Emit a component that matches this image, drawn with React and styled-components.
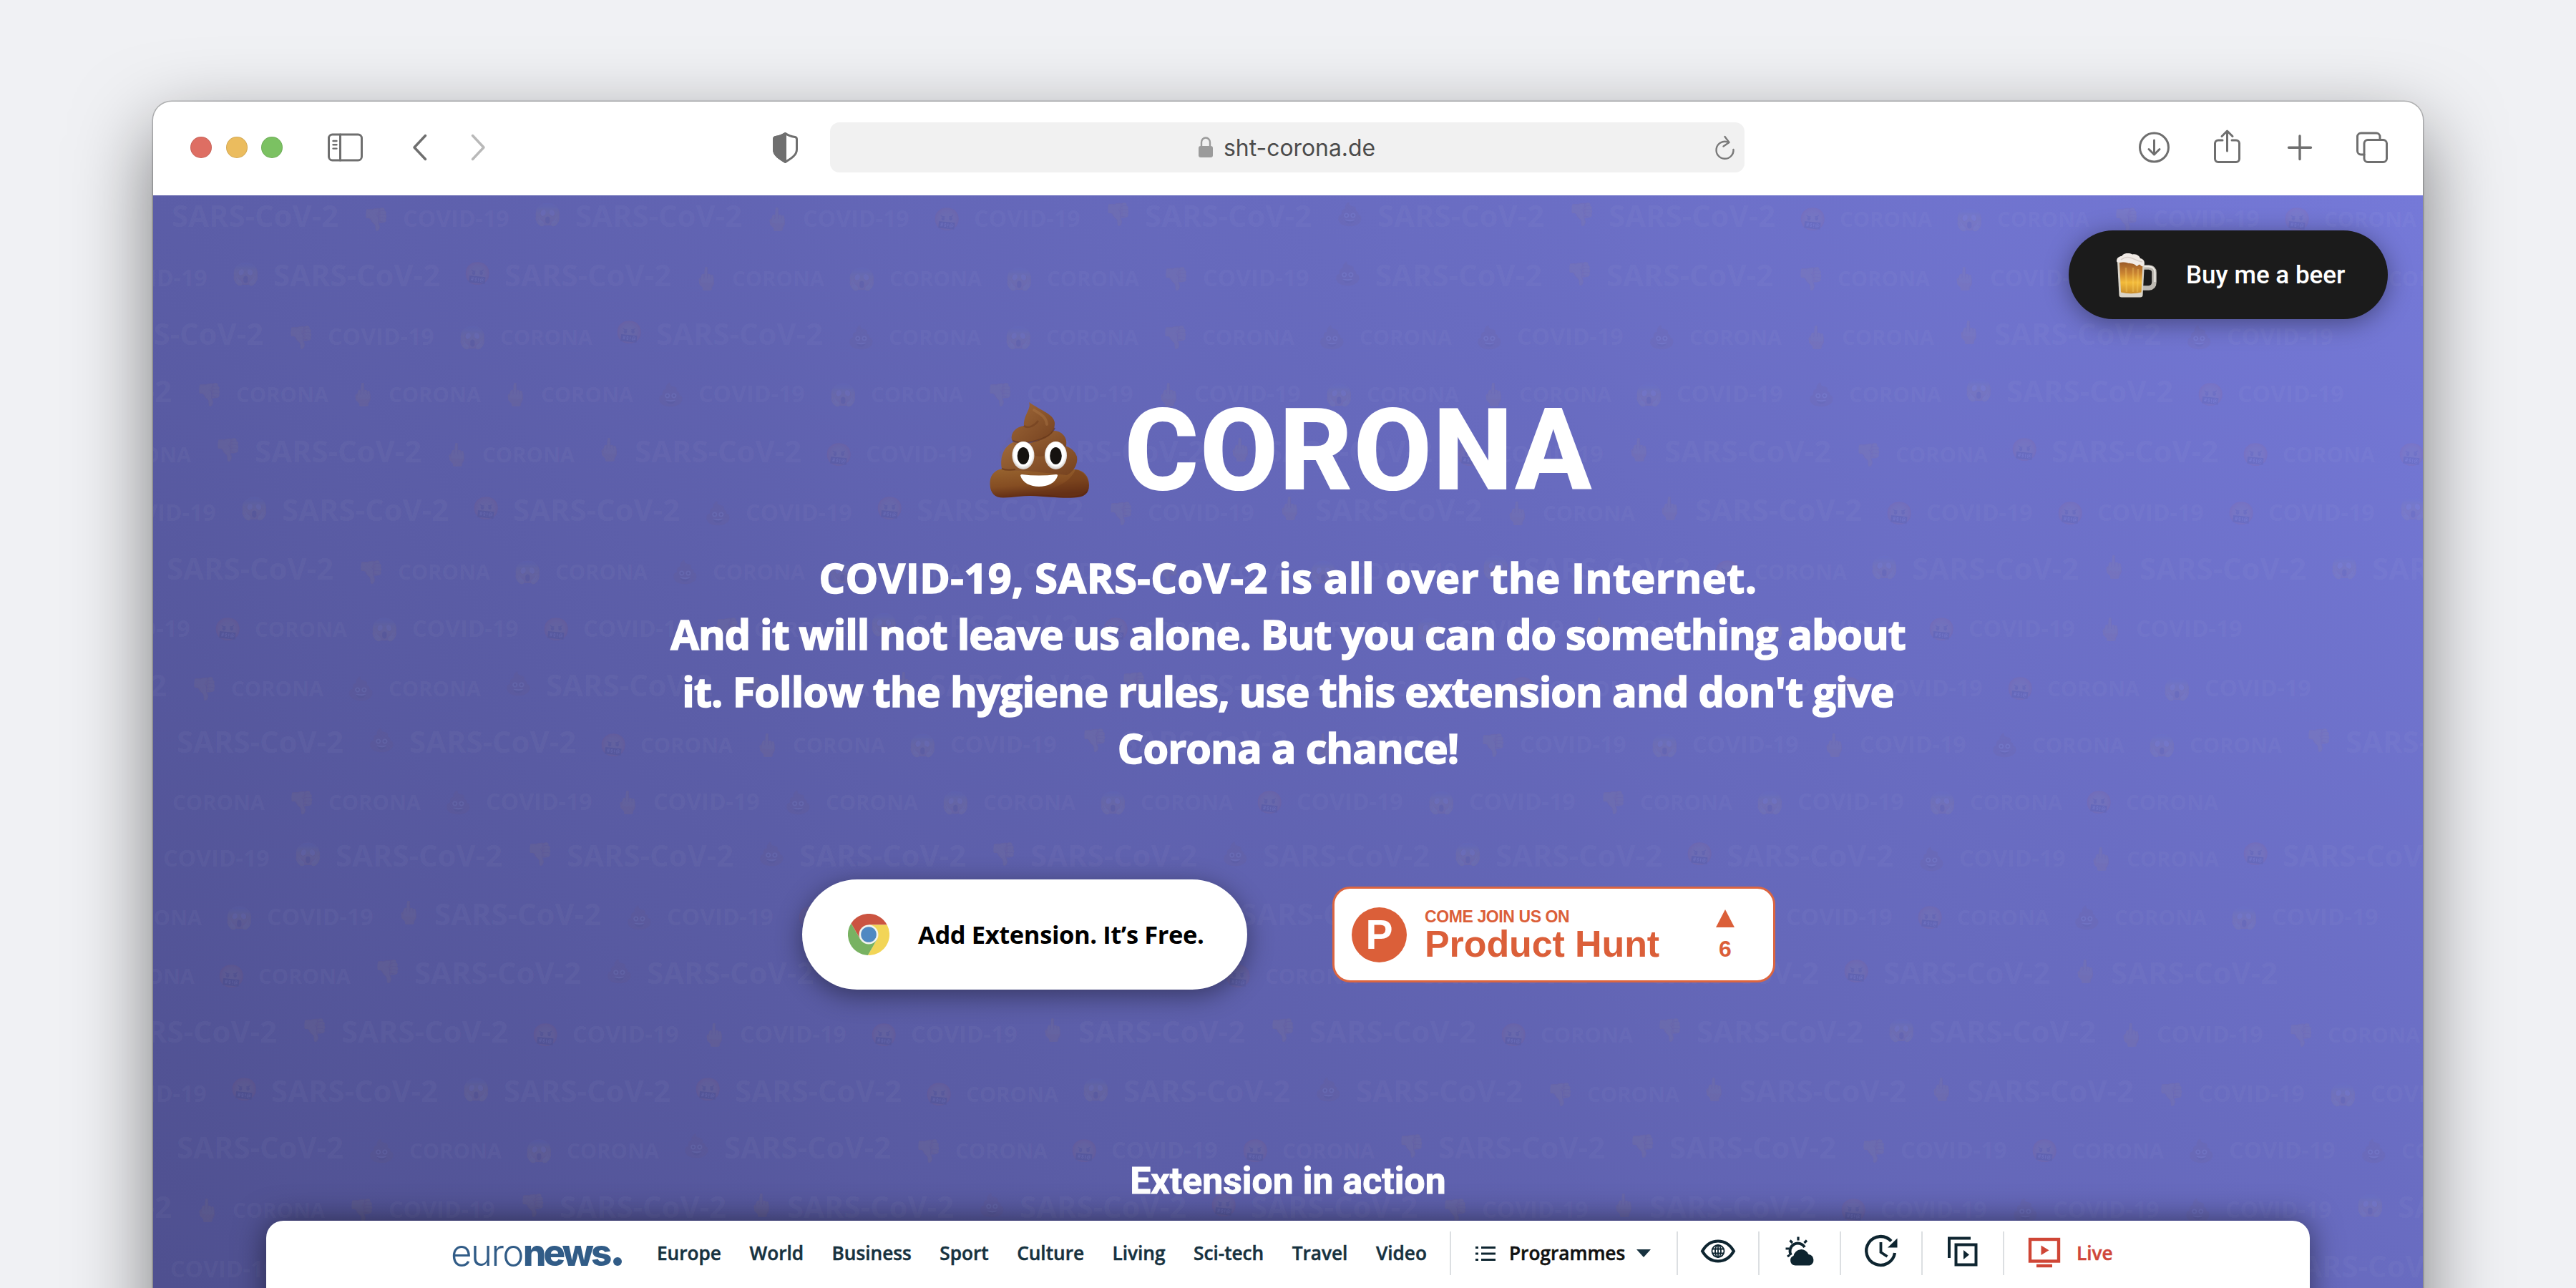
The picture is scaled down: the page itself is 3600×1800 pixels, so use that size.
import styled, { createGlobalStyle } from 'styled-components'

const GlobalStyle = createGlobalStyle`
  * {
    box-sizing: border-box;
  }

  body {
    margin: 0;
  }
`

const Desktop = styled.div`
  height: 1800px;
  padding: 142px 214px 0;
  overflow: hidden;
  background: #f0f1f4;
`

const Browser = styled.div`
  display: flex;
  flex-direction: column;
  height: 1760px;
  border-radius: 26px;
  overflow: hidden;
  background: #fff;
  box-shadow: 0 0 0 1.5px rgba(0, 0, 0, 0.22), 0 40px 110px rgba(0, 0, 0, 0.5);
`

/* browser toolbar */

const Toolbar = styled.div`
  display: flex;
  align-items: center;
  flex: none;
  height: 131px;
  padding: 0 47px 3px 52px;
  color: #6f6f6f;
`

const Lights = styled.div`
  display: flex;
  gap: 19.5px;
`

const Light = styled.span`
  width: 30px;
  height: 30px;
  border-radius: 50%;
  background: ${({ $color }) => $color};
  box-shadow: inset 0 0 0 1px rgba(0, 0, 0, 0.1);
`

const ToolIcon = styled.svg`
  flex: none;
  width: ${({ $width }) => $width}px;
  height: 48px;
  margin-left: ${({ $gap }) => $gap}px;
  overflow: visible;
  fill: none;
  stroke: ${({ $muted }) => ($muted ? '#b9b9b9' : 'currentColor')};
  stroke-width: 3;
  stroke-linecap: round;
  stroke-linejoin: round;
`

const AddressBar = styled.div`
  display: flex;
  align-items: center;
  flex: none;
  width: 1278px;
  height: 70px;
  margin-left: 45px;
  padding: 0 14px 0 515px;
  border-radius: 13px;
  background: #f1f1f1;
`

const Address = styled.span`
  flex: 1;
  margin-left: 15px;
  font: 400 31.9px/70px Inter, sans-serif;
  color: #4c4c4c;
  padding-top: 2px;
`

const AddressIcon = styled.svg`
  flex: none;
  width: ${({ $width }) => $width}px;
  height: 34px;
  overflow: visible;
  fill: none;
  stroke: #7a7a7a;
  stroke-width: 2.4;
  stroke-linecap: round;
  stroke-linejoin: round;
`

/* page */

const Page = styled.div`
  position: relative;
  flex: 1;
  overflow: hidden;
  background: linear-gradient(45deg, #4e4f8e, #7579d8);
`

const Wallpaper = styled.div`
  position: absolute;
  inset: -12px 0 0;
  overflow: hidden;
`

const WallRow = styled.div`
  display: flex;
  align-items: baseline;
  height: ${({ $height }) => $height}px;
  margin-left: ${({ $start }) => $start - 216}px;
`

const Word = styled.span`
  flex: none;
  width: ${({ $width }) => $width}px;
  font: 700 ${({ $size }) => $size}px/80px 'Open Sans', sans-serif;
  white-space: nowrap;
  color: rgba(255, 255, 255, 0.046);
`

const Emoji = styled.span`
  flex: none;
  width: ${({ $width }) => $width}px;
  padding-left: 15px;
  font: 31px/60px 'Noto Color Emoji', sans-serif;
  text-align: center;
  opacity: 0.048;
  transform: translateY(${({ $raised }) => ($raised ? -7 : 0)}px);
`

const Blank = styled.span`
  flex: none;
  width: ${({ $width }) => $width}px;
`

const Content = styled.main`
  position: relative;
  display: flex;
  flex-direction: column;
  align-items: center;
  color: #fff;
`

const BeerButton = styled.button`
  display: flex;
  align-items: center;
  align-self: flex-end;
  width: 446px;
  height: 124px;
  margin: 49px 49px 0 0;
  padding: 2px 0 0 67px;
  border: 0;
  border-radius: 62px;
  background: #1b1b1b;
  box-shadow: 0 6px 34px rgba(0, 0, 0, 0.38);
  font: 500 35px/60px Roboto, sans-serif;
  color: #fff;
`

const BeerIcon = styled.svg`
  flex: none;
  width: 57px;
  height: 62px;
  margin-right: 40px;
`

const Heading = styled.h1`
  display: flex;
  align-items: center;
  gap: 49px;
  margin: 104px 0 0 9px;
  font: 800 159px/160px Roboto, sans-serif;
  letter-spacing: 1.2px;
`

const Poop = styled.svg`
  width: 139px;
  height: 134px;
  margin-top: -3px;
  overflow: visible;
`

const Lead = styled.p`
  display: flex;
  flex-direction: column;
  align-items: center;
  margin: 58px 0 0;
  font: 700 57.5px/79.3px 'Open Sans', sans-serif;
  white-space: nowrap;
  -webkit-text-stroke: 1.6px #fff;
`

const Line = styled.span`
  letter-spacing: ${({ $tracking }) => $tracking}px;
`

const Actions = styled.div`
  display: flex;
  align-items: center;
  gap: 119px;
  margin: 144px 0 0 2px;
`

const AddButton = styled.button`
  display: flex;
  align-items: center;
  width: 622px;
  height: 154px;
  padding: 0 0 0 64px;
  border: 0;
  border-radius: 77px;
  background: #fff;
  box-shadow: 0 8px 36px rgba(0, 0, 0, 0.42);
  font: 700 34.5px/60px 'Open Sans', sans-serif;
  letter-spacing: -0.4px;
  white-space: nowrap;
  color: #000;
`

const ChromeIcon = styled.svg`
  flex: none;
  width: 58px;
  height: 58px;
  margin-right: 40px;
`

const HuntBadge = styled.a`
  display: flex;
  align-items: center;
  width: 619px;
  height: 134px;
  padding: 0 54px 0 24px;
  border: 3px solid #dc6540;
  border-radius: 25px;
  background: #fff;
  font-family: 'Liberation Sans', Arial, sans-serif;
  font-weight: 700;
  color: #db5f39;
`

const HuntLogo = styled.span`
  width: 77px;
  height: 77px;
  border-radius: 50%;
  background: #db5f39;
  font-size: 57px;
  line-height: 77px;
  text-align: center;
  color: #fff;
`

const HuntText = styled.span`
  display: flex;
  flex-direction: column;
  flex: 1;
  margin-left: 25px;
  padding-top: 2px;
  white-space: nowrap;
`

const HuntSmall = styled.small`
  font-size: 23px;
  line-height: 24px;
  letter-spacing: -0.4px;
`

const HuntName = styled.strong`
  font-size: 52px;
  line-height: 53px;
  letter-spacing: -0.1px;
`

const Votes = styled.span`
  display: flex;
  flex-direction: column;
  align-items: center;
  gap: 12px;
  font-size: 32px;
  line-height: 36px;
  margin-top: 3px;
`

const UpArrow = styled.span`
  border: 13.5px solid transparent;
  border-top: 0;
  border-bottom: 25px solid #db5f39;
`

const SectionTitle = styled.h2`
  margin: 238px 0 0;
  font: 700 51.6px/60px Roboto, sans-serif;
  letter-spacing: 0.1px;
  -webkit-text-stroke: 0.9px #fff;
`

/* news site shown in the demo */

const Demo = styled.section`
  display: flex;
  align-items: flex-start;
  width: 2856px;
  height: 300px;
  margin: 25px 0 0;
  padding: 15px 0 0 258px;
  border-radius: 24px;
  background: #fff;
  box-shadow: 0 0 44px rgba(0, 0, 0, 0.5);
  font: 600 26.2px/61px 'Open Sans', sans-serif;
  color: #17323f;
`

const NewsLogo = styled.div`
  display: flex;
  align-items: baseline;
  flex: none;
  width: 288px;
  font: 300 51px/60px Inter, sans-serif;
  letter-spacing: -1.6px;
  color: #315c87;

  b {
    font-weight: 800;
    letter-spacing: -3.8px;
  }

  i {
    width: 12px;
    height: 12px;
    margin-left: 6px;
    border-radius: 50%;
    background: currentColor;
  }
`

const Nav = styled.nav`
  display: flex;
  justify-content: space-between;
  flex: none;
  width: 1076px;
  margin-right: 32px;
  -webkit-text-stroke: 0.5px currentColor;
`

const Tool = styled.div`
  display: flex;
  align-items: center;
  flex: none;
  justify-content: ${({ $wide }) => ($wide ? 'flex-start' : 'center')};
  width: ${({ $wide }) => $wide || 114}px;
  height: 61px;
  padding-left: ${({ $wide }) => ($wide ? 34 : 0)}px;
  border-left: 2px solid #dcdfe2;
  color: ${({ $color }) => $color || '#0e2530'};
`

const SiteIcon = styled.svg`
  flex: none;
  width: ${({ $width }) => $width}px;
  height: 48px;
  margin-top: -7px;
  overflow: visible;
  fill: none;
  stroke: currentColor;
  stroke-width: 4;
`

const ToolLabel = styled.span`
  margin-left: ${({ $gap }) => $gap}px;
  color: ${({ $color }) => $color};
  -webkit-text-stroke: 0.5px currentColor;
`

const Caret = styled.span`
  margin-left: 16px;
  border: 10px solid transparent;
  border-bottom: 0;
  border-top: 11px solid #17323f;
`

const WORDS = {
  S: { text: 'SARS-CoV-2', size: 41.8, width: 233 },
  C: { text: 'COVID-19', size: 32.2, width: 149 },
  K: { text: 'CORONA', size: 29.4, width: 128 }
}

const EMOJI = {
  t: { text: '👎', width: 90 },
  s: { text: '😱', width: 92 },
  m: { text: '🤬', width: 90 },
  f: { text: '🖕', width: 85 },
  p: { text: '💩', width: 92 }
}

// height of the row, x where it starts, then words and emojis; other numbers are blanks
const ROWS = [
  '83 242 S t C s S f C m C t S p S t S m K s K t C m K',
  '82 143 C s S m S f K s K s K t C p S t S t K f C m S f K',
  '80 137 S t C s K m S p K s K t K p K p C p K f K f S p C',
  '83.5 9 S t K f K f K p C s K t C f C s K f K s C p K s S m C',
  '82.5 140 K t S f K f S m C p S f S m C f S t K m S m K m C',
  '82 155 C s S m S p C m S t C f S f K f S m C m C m C s S',
  '80 235 S t K s K p K s K f C t K s C s S m K s S f S s S',
  '83 119 C m K s C m C t K s S m K p K s C f C s C m C f C',
  '79 2 S t K p K p S t K f S t S p K m K m C m C m K s C',
  '84 249 S p S m K f K s C t S f C t C s C f C p K s K t S',
  '75 243 K t K p C f C p K s K s K m C s C t K s C s K m K',
  '82 230 C s S t S p S t S p S s S m S p C f K m S',
  '82 155 K s C f S p C m C m S m S s K p K m C m K p K s C',
  '82 145 K m K t S p S m S t K m K m S t S m S f S',
  '83 156 S t S m C f C m C f S t S m K t S s S f C t K',
  '79 142 C m S s S m S m K s S p S t K f S f S t C s C',
  '83 249 S p K s K p S t K m C m K t S t S t C m K p C p K',
  '83 9 S f K t C t S f S p S m S t C f S m C p C p C s S',
  '83 240 C 2806 S'
]

const Wall = () => (
  <Wallpaper aria-hidden>
    {ROWS.map((row, i) => {
      const [height, start, ...tokens] = row.split(' ')
      return (
        <WallRow key={i} $height={Number(height)} $start={Number(start)}>
          {tokens.map((token, j) => {
            if (WORDS[token]) {
              const { text, size, width } = WORDS[token]
              return (
                <Word key={j} $size={size} $width={width}>
                  {text}
                </Word>
              )
            }
            if (EMOJI[token]) {
              const { text, width } = EMOJI[token]
              return (
                <Emoji key={j} $width={width} $raised={tokens[j + 1] === 'S'}>
                  {text}
                </Emoji>
              )
            }
            return <Blank key={j} $width={Number(token)} />
          })}
        </WallRow>
      )
    })}
  </Wallpaper>
)

const BrowserToolbar = () => (
  <Toolbar>
    <Lights>
      <Light $color="#de6e63" />
      <Light $color="#ebbc5e" />
      <Light $color="#7bc162" />
    </Lights>
    <ToolIcon $width={49} $gap={63} viewBox="0 0 49 48">
      <rect x="1.5" y="6" width="46" height="36" rx="5" />
      <path d="M17.5 6v36" />
      <path d="M7.5 15h5M7.5 20.3h5M7.5 25.6h5" strokeWidth="2.4" />
    </ToolIcon>
    <ToolIcon $width={19} $gap={70} viewBox="0 0 19 48">
      <path d="M17.5 7.5L2 24l15.5 16.5" strokeWidth="3.5" />
    </ToolIcon>
    <ToolIcon $width={19} $gap={63} $muted viewBox="0 0 19 48">
      <path d="M1.5 7.5L17 24L1.5 40.5" strokeWidth="3.5" />
    </ToolIcon>
    <ToolIcon $width={35} $gap={402} viewBox="0 0 35 48">
      <path d="M17.5 4.5C12.5 8 7.5 9 4 9.6Q1.5 10 1.5 12.5V27C1.5 35 10 40 17.5 44.5C25 40 33.5 35 33.5 27V12.5Q33.5 10 31 9.6C27.5 9 22.5 8 17.5 4.5Z" />
      <path
        d="M17.5 4.5C12.5 8 7.5 9 4 9.6Q1.5 10 1.5 12.5V27C1.5 35 10 40 17.5 44.5Z"
        fill="currentColor"
      />
    </ToolIcon>
    <AddressBar>
      <AddressIcon $width={20} viewBox="0 0 20 34">
        <rect x="0" y="15" width="20" height="16" rx="3" fill="#9b9b9b" stroke="none" />
        <path d="M4 15V10a6 6.5 0 0 1 12 0v5" stroke="#9b9b9b" />
      </AddressIcon>
      <Address>sht-corona.de</Address>
      <AddressIcon $width={27} viewBox="0 0 27 34">
        <path d="M17 9.3A12 12 0 1 0 25.5 20" />
        <path d="M13.5 2l6 8l-8 5.5" />
      </AddressIcon>
    </AddressBar>
    <ToolIcon $width={43} $gap={551} viewBox="0 0 43 48">
      <circle cx="21.5" cy="24" r="20" />
      <path d="M21.5 14v20M14 26.5l7.5 7.5l7.5-7.5" />
    </ToolIcon>
    <ToolIcon $width={37} $gap={62} viewBox="0 0 37 48">
      <path d="M12 14H6a4.5 4.5 0 0 0-4.5 4.5V40A4.5 4.5 0 0 0 6 44.5H31A4.5 4.5 0 0 0 35.5 40V18.5A4.5 4.5 0 0 0 31 14h-6" />
      <path d="M18.5 29V1.5M11 8.5l7.5-7.5l7.5 7.5" />
    </ToolIcon>
    <ToolIcon $width={34} $gap={66} viewBox="0 0 34 48">
      <path d="M17 8v32.5M1.5 24.2h31" strokeWidth="3.4" />
    </ToolIcon>
    <ToolIcon $width={44} $gap={62} viewBox="0 0 44 48">
      <path d="M11 34H6.5A5 5 0 0 1 1.5 29V9A5 5 0 0 1 6.5 4H28a5 5 0 0 1 5 5v4.5" />
      <rect x="11" y="13.5" width="31.5" height="31" rx="5" />
    </ToolIcon>
  </Toolbar>
)

const BeerMug = () => (
  <BeerIcon viewBox="0 0 57 62">
    <defs>
      <linearGradient id="ale" x1="0" y1="0" x2="0" y2="1">
        <stop offset="0" stopColor="#9a5a28" />
        <stop offset="0.35" stopColor="#c98331" />
        <stop offset="0.65" stopColor="#f3bb3a" />
        <stop offset="1" stopColor="#c98c2b" />
      </linearGradient>
    </defs>
    <path
      d="M37 19.5H45Q52.5 20 52.5 27V40Q52.5 48 45 48.5H36"
      fill="none"
      stroke="#bdb9b2"
      strokeWidth="6.5"
    />
    <path d="M37 18.5H45Q53.5 19 53.5 27V40" fill="none" stroke="#efece6" strokeWidth="2" />
    <path d="M1 11L39 13L36.5 59Q36 61.5 33 61.5H7Q4 61.5 3.5 59Z" fill="#d9d4c9" />
    <path d="M4 12L36.5 14L34.5 54.5Q20 58 6 54.5Z" fill="url(#ale)" />
    <path d="M13 20L14 54M23 20V54M30 22L29 54" stroke="#ffd869" strokeWidth="2.5" opacity="0.3" />
    <path
      d="M0 11C0 6 4 4 7 4C10-1 18-1 22 1.5C28 0 32 4 33 7C38 8 40 12 38 15C39 19 34 19 33 16C30 15 29 20 27 17C23 13 18 15 14 13C10 11 5 14 3 12.5Q0 13 0 11Z"
      fill="#f1ebe6"
    />
    <path d="M6 9Q14 3 22 7T36 12" stroke="#d9cfc9" strokeWidth="1.5" fill="none" />
  </BeerIcon>
)

const PoopEmoji = () => (
  <Poop viewBox="0 0 139 134">
    <defs>
      <linearGradient id="base" x1="0" y1="0" x2="0.3" y2="1">
        <stop offset="0" stopColor="#98642f" />
        <stop offset="0.6" stopColor="#854d22" />
        <stop offset="1" stopColor="#5e2a14" />
      </linearGradient>
      <linearGradient id="tier" x1="0" y1="0" x2="1" y2="1">
        <stop offset="0" stopColor="#a06a3a" />
        <stop offset="1" stopColor="#75411f" />
      </linearGradient>
      <radialGradient id="eye" cx="0.5" cy="0.45" r="0.55">
        <stop offset="0.75" stopColor="#fff" />
        <stop offset="1" stopColor="#cfc8c4" />
      </radialGradient>
    </defs>
    <path
      d="M18 93C6 95 0 103 0.5 115C1 128 8 134 20 133.5C34 133 46 131 57 131C80 132 100 134.5 118 133.5C132 133 139 128 139 116C139 104 132 95 120 94Z"
      fill="url(#base)"
    />
    <path
      d="M33 56C20 62 14 76 17 93C24 98 40 94 60 97L108 102C116 98 124 88 122 76Q119 66 106 61Z"
      fill="url(#tier)"
    />
    <path
      d="M60 128C86 124 112 114 120 94C132 97 139 106 138 118C136 130 120 132 104 132Z"
      fill="#6c3819"
      opacity="0.45"
    />
    <path
      d="M33 56C40 62 58 58 70 52C80 47 84 40 91 40C102 41 109 50 107 61C104 66 90 74 70 76L40 72Z"
      fill="url(#tier)"
    />
    <path
      d="M55 0C59 9 47 18 48 33C36 35 29 43 31 53C40 60 60 56 76 50C88 45 91 38 91 29C90 17 72 12 55 0Z"
      fill="url(#tier)"
    />
    <path
      d="M48 33C54 38 64 32 68 26"
      fill="none"
      stroke="#6b3a1b"
      strokeWidth="2.5"
      opacity="0.5"
    />
    <path
      d="M62 11C72 17 79 21 80 31"
      fill="none"
      stroke="#b07a48"
      strokeWidth="4"
      strokeLinecap="round"
      opacity="0.4"
    />
    <path
      d="M32 54C46 60 66 55 78 49C86 45 89 41 91 36"
      fill="none"
      stroke="#5f3015"
      strokeWidth="2"
      opacity="0.6"
    />
    <path
      d="M17 93C24 96 30 95 36 94"
      fill="none"
      stroke="#5f3015"
      strokeWidth="2"
      opacity="0.6"
    />
    <ellipse cx="47" cy="74.5" rx="15.5" ry="19.5" fill="url(#eye)" />
    <ellipse cx="92.5" cy="74.5" rx="15.5" ry="19.5" fill="url(#eye)" />
    <ellipse cx="47" cy="75" rx="8.3" ry="12" fill="#15120f" />
    <ellipse cx="92.5" cy="75" rx="8.3" ry="12" fill="#15120f" />
    <path
      d="M43 102.5Q43 101 45 101Q69 104 93 101Q95.5 101 95 103C92 113 81 118 69 118C57 118 46 113 43 102.5Z"
      fill="#fff"
    />
  </Poop>
)

const ChromeLogo = () => (
  <ChromeIcon viewBox="-29 -29 58 58">
    <path d="M-24.55 -15.5A29 29 0 0 1 25.7 -13.5H0L-11.7 6.75Z" fill="#cb5441" />
    <path d="M25.7 -13.5A29 29 0 0 1 -1.15 29L11.7 6.75L0 -13.5Z" fill="#f2d557" />
    <path d="M-1.15 29A29 29 0 0 1 -24.55 -15.5L-11.7 6.75L11.7 6.75Z" fill="#78b262" />
    <circle r="13.5" fill="#f2f4ee" />
    <circle r="10.8" fill="#5089c2" />
  </ChromeIcon>
)

const NAV = ['Europe', 'World', 'Business', 'Sport', 'Culture', 'Living', 'Sci-tech', 'Travel', 'Video']

const NewsBar = () => (
  <Demo>
    <NewsLogo>
      euro<b>news</b>
      <i />
    </NewsLogo>
    <Nav>
      {NAV.map(item => (
        <span key={item}>{item}</span>
      ))}
    </Nav>
    <Tool $wide={317}>
      <SiteIcon $width={28} viewBox="0 0 28 48">
        <path
          d="M0 19.5h4M8 19.5h20M0 28h4M8 28h20M0 36.5h4M8 36.5h20"
          strokeWidth="3.2"
        />
      </SiteIcon>
      <ToolLabel $gap={19} $color="#111">
        Programmes
      </ToolLabel>
      <Caret />
    </Tool>
    <Tool>
      <SiteIcon $width={48} viewBox="0 0 48 48">
        <path d="M2 24.5C8 14 16 10.5 24 10.5S40 14 46 24.5C40 35 32 38.5 24 38.5S8 35 2 24.5Z" />
        <g strokeWidth="1.8">
          <circle cx="24" cy="24.5" r="8.5" />
          <ellipse cx="24" cy="24.5" rx="4" ry="8.5" />
          <path d="M24 16v17M16 21.5h16M16 27.5h16" />
        </g>
      </SiteIcon>
    </Tool>
    <Tool>
      <SiteIcon $width={44} viewBox="0 0 44 48">
        <path d="M10 30A10.5 10.5 0 1 1 29 19" strokeWidth="3.8" />
        <path
          d="M20 4.5v5M8.5 9.5l3.5 3.5M32 9.5l-3.5 3.5M2.5 21h5M5 32l3-2"
          strokeWidth="3.2"
        />
        <path
          d="M16 44.5a7 7 0 0 1-2.5-13.5a11 11 0 0 1 21-2a8 8 0 0 1 1.5 15.5Z"
          fill="currentColor"
          stroke="none"
        />
      </SiteIcon>
    </Tool>
    <Tool>
      <SiteIcon $width={46} viewBox="0 0 46 48">
        <path d="M37 10.5A20 20 0 1 0 42 27" strokeWidth="4.3" />
        <path d="M22.5 12v14l9 6" strokeWidth="3.8" />
        <path d="M45.5 6.5v13h-13.5Z" fill="currentColor" stroke="none" />
      </SiteIcon>
    </Tool>
    <Tool>
      <SiteIcon $width={42} viewBox="0 0 42 48">
        <path d="M2 34V6.5h30" />
        <rect x="11.5" y="15.5" width="28" height="28" />
        <path d="M22 23v13l8-6.5Z" fill="currentColor" stroke="none" />
      </SiteIcon>
    </Tool>
    <Tool $wide={260} $color="#cf4636">
      <SiteIcon $width={44} viewBox="0 0 44 48">
        <rect x="2" y="8" width="40" height="30.5" strokeWidth="4.4" />
        <path d="M17.5 16.5v13.5l11-6.75Z" fill="currentColor" stroke="none" />
        <path d="M11 45h22" strokeWidth="4.4" />
      </SiteIcon>
      <ToolLabel $gap={23} $color="#d0473a">
        Live
      </ToolLabel>
    </Tool>
  </Demo>
)

const App = () => (
  <>
    <GlobalStyle />
    <Desktop>
      <Browser>
        <BrowserToolbar />
        <Page>
          <Wall />
          <Content>
            <BeerButton>
              <BeerMug />
              Buy me a beer
            </BeerButton>
            <Heading>
              <PoopEmoji />
              CORONA
            </Heading>
            <Lead>
              <Line $tracking={0.5}>COVID-19, SARS-CoV-2 is all over the Internet.</Line>
              <Line $tracking={-1}>And it will not leave us alone. But you can do something about</Line>
              <Line $tracking={-0.85}>
                it. Follow the hygiene rules, use this extension and don't give
              </Line>
              <Line $tracking={-0.9}>Corona a chance!</Line>
            </Lead>
            <Actions>
              <AddButton>
                <ChromeLogo />
                Add Extension. It’s Free.
              </AddButton>
              <HuntBadge>
                <HuntLogo>P</HuntLogo>
                <HuntText>
                  <HuntSmall>COME JOIN US ON</HuntSmall>
                  <HuntName>Product Hunt</HuntName>
                </HuntText>
                <Votes>
                  <UpArrow />6
                </Votes>
              </HuntBadge>
            </Actions>
            <SectionTitle>Extension in action</SectionTitle>
            <NewsBar />
          </Content>
        </Page>
      </Browser>
    </Desktop>
  </>
)

export default App
